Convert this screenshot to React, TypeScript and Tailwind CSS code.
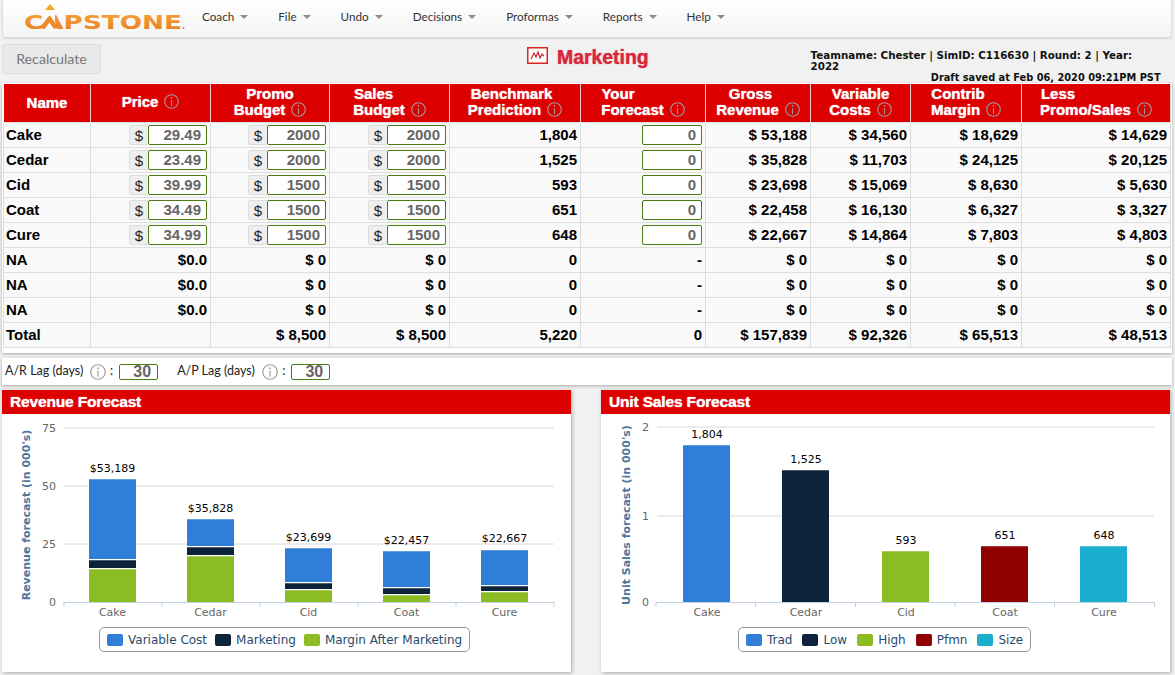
const navItems = ["Coach", "File", "Undo", "Decisions", "Proformas", "Reports", "Help"];

type Row = {
  name: string;
  price: string;
  promo: string;
  sales: string;
  bench: string;
  forecast: string;
  gross: string;
  variable: string;
  margin: string;
  less: string;
  editable?: boolean;
};

const rows: Row[] = [
  { name: "Cake", price: "29.49", promo: "2000", sales: "2000", bench: "1,804", forecast: "0", gross: "$ 53,188", variable: "$ 34,560", margin: "$ 18,629", less: "$ 14,629", editable: true },
  { name: "Cedar", price: "23.49", promo: "2000", sales: "2000", bench: "1,525", forecast: "0", gross: "$ 35,828", variable: "$ 11,703", margin: "$ 24,125", less: "$ 20,125", editable: true },
  { name: "Cid", price: "39.99", promo: "1500", sales: "1500", bench: "593", forecast: "0", gross: "$ 23,698", variable: "$ 15,069", margin: "$ 8,630", less: "$ 5,630", editable: true },
  { name: "Coat", price: "34.49", promo: "1500", sales: "1500", bench: "651", forecast: "0", gross: "$ 22,458", variable: "$ 16,130", margin: "$ 6,327", less: "$ 3,327", editable: true },
  { name: "Cure", price: "34.99", promo: "1500", sales: "1500", bench: "648", forecast: "0", gross: "$ 22,667", variable: "$ 14,864", margin: "$ 7,803", less: "$ 4,803", editable: true },
  { name: "NA", price: "$0.0", promo: "$ 0", sales: "$ 0", bench: "0", forecast: "-", gross: "$ 0", variable: "$ 0", margin: "$ 0", less: "$ 0" },
  { name: "NA", price: "$0.0", promo: "$ 0", sales: "$ 0", bench: "0", forecast: "-", gross: "$ 0", variable: "$ 0", margin: "$ 0", less: "$ 0" },
  { name: "NA", price: "$0.0", promo: "$ 0", sales: "$ 0", bench: "0", forecast: "-", gross: "$ 0", variable: "$ 0", margin: "$ 0", less: "$ 0" },
  { name: "Total", price: "", promo: "$ 8,500", sales: "$ 8,500", bench: "5,220", forecast: "0", gross: "$ 157,839", variable: "$ 92,326", margin: "$ 65,513", less: "$ 48,513" },
];

const headers = [
  { top: "Promo", bottom: "Budget", topClass: "" },
  { top: "Sales", bottom: "Budget", topClass: "pr-[32px]" },
  { top: "Benchmark", bottom: "Prediction", topClass: "pr-[7px]" },
  { top: "Your", bottom: "Forecast", topClass: "pr-[50px]" },
  { top: "Gross", bottom: "Revenue", topClass: "pr-[15px]" },
  { top: "Variable", bottom: "Costs", topClass: "" },
  { top: "Contrib", bottom: "Margin", topClass: "pr-[16px]" },
  { top: "Less", bottom: "Promo/Sales", topClass: "pr-[76px]" },
];

const BLUE = "#2f7ed8";
const NAVY = "#0d233a";
const GREEN = "#8bbc21";
const MAROON = "#910000";
const CYAN = "#1aadce";

// page coordinates: [x, label, labelY, blueTop, blueBottom, navyTop, navyBottom, greenTop]
const revenueBars: [number, string, string, number, number, number, number, number, number][] = [
  [89, "Cake", "$53,189", 472, 479, 559, 560, 568, 569],
  [187, "Cedar", "$35,828", 512, 519, 546, 547, 555, 556],
  [285, "Cid", "$23,699", 541, 548, 582, 583, 589, 590],
  [383, "Coat", "$22,457", 544, 551, 587, 588, 594, 595],
  [481, "Cure", "$22,667", 542, 550, 585, 586, 591, 592],
];

const unitBars = [
  { x: 683, name: "Cake", label: "1,804", top: 445, fill: BLUE },
  { x: 782, name: "Cedar", label: "1,525", top: 470, fill: NAVY },
  { x: 882, name: "Cid", label: "593", top: 551, fill: GREEN },
  { x: 981, name: "Coat", label: "651", top: 546, fill: MAROON },
  { x: 1080, name: "Cure", label: "648", top: 546, fill: CYAN },
];

function InfoIcon({ size = 15, className = "" }: { size?: number; className?: string }) {
  return (
    <svg width={size} height={size} viewBox="0 0 15 15" fill="none" className={`inline-block shrink-0 ${className}`}>
      <circle cx="7.5" cy="7.5" r="6.8" stroke="#a09a9a" strokeWidth="1.1" />
      <circle cx="7.5" cy="3.9" r="0.8" fill="#a09a9a" />
      <path d="M7.5 6.2V12" stroke="#a09a9a" strokeWidth="1.1" />
    </svg>
  );
}

function Logo() {
  return (
    <svg width="166" height="30" viewBox="0 0 166 30" className="shrink-0">
      <defs>
        <linearGradient id="logoFill" x1="0" y1="0" x2="0" y2="1">
          <stop offset="0" stopColor="#f7a83c" />
          <stop offset="1" stopColor="#e8791f" />
        </linearGradient>
      </defs>
      <text x="1" y="25" fontFamily="'DejaVu Sans', sans-serif" fontWeight="700" fontSize="20" textLength="158" lengthAdjust="spacingAndGlyphs" fill="url(#logoFill)">
        CAPSTONE
      </text>
      <polygon points="22,0 32,0 32,25 22,25" fill="#fbfbfb" />
      <path d="M16 24.5 L25 13 L26.5 11.5 L28 13 L36 24.5 L30.5 24.5 L26.5 18.5 L22 24.5 Z" fill="#ee8a2a" />
      <polygon points="22,6 27,0 32,6" fill="#f6a623" />
      <circle cx="160.5" cy="24" r="0.9" fill="#e8791f" />
    </svg>
  );
}

function MoneyInput({ value, addon = true }: { value: string; addon?: boolean }) {
  return (
    <div className="flex h-[20px] justify-end">
      {addon && (
        <span className="flex w-[19px] items-end justify-center rounded-l-[3px] border border-r-0 border-[#ddd] bg-[#eee] text-[15px] font-normal leading-[17px] text-[#222]">
          $
        </span>
      )}
      <input
        readOnly
        value={value}
        className={`${addon ? "w-[59px]" : "w-[60px]"} h-[20px] rounded-[2px] border border-[#4c7a12] bg-white px-[5px] text-right text-[15px] font-bold text-[#666] outline-none`}
      />
    </div>
  );
}

function LagInput({ value }: { value: string }) {
  return (
    <input
      readOnly
      value={value}
      className="mt-[1px] h-[16px] w-[39px] rounded-[2px] border border-[#4c7a12] bg-white pr-[6px] text-right font-['Liberation_Sans'] text-[16px] font-bold text-[#666] outline-none"
    />
  );
}

function Cell({ children, className = "" }: { children?: React.ReactNode; className?: string }) {
  return <td className={`h-[25px] border border-[#ddd] px-[3px] py-0 text-right ${className}`}>{children}</td>;
}

function Caret() {
  return <span className="ml-[6px] h-0 w-0 border-x-[4px] border-t-[4px] border-x-transparent border-t-[#8c8c8c]" />;
}

function Legend({ items, className }: { items: { label: string; color: string }[]; className: string }) {
  return (
    <div className={`flex h-[25px] w-fit items-center rounded-[5px] border border-[#999] px-[7px] font-['DejaVu_Sans',sans-serif] text-[12px] text-[#274b6d] ${className}`}>
      {items.map((item) => (
        <span key={item.label} className="flex items-center gap-[5px]">
          <span className="h-[12px] w-[16px] rounded-[2px]" style={{ background: item.color }} />
          {item.label}
        </span>
      ))}
    </div>
  );
}

function Bar({ x, y, bottom, fill }: { x: number; y: number; bottom: number; fill: string }) {
  return (
    <g>
      <rect x={x} y={y} width="47" height={bottom - y} fill={fill} />
      <rect x={x} y={y} width="47" height="1" fill="#fff" opacity="0.25" />
    </g>
  );
}

function RevenueChart() {
  const grid = [
    { y: 428, label: "75" },
    { y: 486, label: "50" },
    { y: 544, label: "25" },
  ];
  return (
    <svg viewBox="2 414 569 213" width="569" height="213" className="block font-['DejaVu_Sans',sans-serif]">
      {grid.map((g) => (
        <g key={g.label}>
          <line x1="64" x2="554" y1={g.y} y2={g.y} stroke="#d8d8d8" strokeWidth="1" />
          <text x="56" y={g.y + 4} textAnchor="end" fontSize="11" fill="#666">
            {g.label}
          </text>
        </g>
      ))}
      <text x="56" y="606" textAnchor="end" fontSize="11" fill="#666">
        0
      </text>
      <text transform="translate(30 515) rotate(-90)" textAnchor="middle" fontSize="11" fontWeight="700" fill="#4d759e">
        Revenue forecast (in 000's)
      </text>
      {revenueBars.map(([x, name, label, labelY, blueTop, blueBottom, navyTop, navyBottom, greenTop]) => (
        <g key={name}>
          <Bar x={x} y={blueTop} bottom={blueBottom} fill={BLUE} />
          <Bar x={x} y={navyTop} bottom={navyBottom} fill={NAVY} />
          <Bar x={x} y={greenTop} bottom={602} fill={GREEN} />
          <text x={x + 23.5} y={labelY} textAnchor="middle" fontSize="11" fill="#000">
            {label}
          </text>
          <text x={x + 23.5} y="616" textAnchor="middle" fontSize="11" fill="#666">
            {name}
          </text>
        </g>
      ))}
      <line x1="64" x2="554" y1="602.5" y2="602.5" stroke="#c0d0e0" />
      {[64, 162, 260, 358, 456, 554].map((x) => (
        <line key={x} x1={x} x2={x} y1="602" y2="607" stroke="#c0d0e0" />
      ))}
    </svg>
  );
}

function UnitChart() {
  return (
    <svg viewBox="601 414 569 213" width="569" height="213" className="block font-['DejaVu_Sans',sans-serif]">
      {[
        { y: 427, label: "2" },
        { y: 516, label: "1" },
      ].map((g) => (
        <g key={g.label}>
          <line x1="657" x2="1154" y1={g.y} y2={g.y} stroke="#d8d8d8" />
          <text x="649" y={g.y + 4} textAnchor="end" fontSize="11" fill="#666">
            {g.label}
          </text>
        </g>
      ))}
      <text x="649" y="606" textAnchor="end" fontSize="11" fill="#666">
        0
      </text>
      <text transform="translate(630 515) rotate(-90)" textAnchor="middle" fontSize="11" fontWeight="700" fill="#4d759e">
        Unit Sales forecast (in 000's)
      </text>
      {unitBars.map((b) => (
        <g key={b.name}>
          <Bar x={b.x} y={b.top} bottom={602} fill={b.fill} />
          <text x={b.x + 24} y={b.top - 7} textAnchor="middle" fontSize="11" fill="#000">
            {b.label}
          </text>
          <text x={b.x + 24} y="616" textAnchor="middle" fontSize="11" fill="#666">
            {b.name}
          </text>
        </g>
      ))}
      <line x1="656" x2="1154" y1="602.5" y2="602.5" stroke="#c0d0e0" />
      {[656, 755.5, 855.5, 955, 1054.5, 1154.5].map((x) => (
        <line key={x} x1={x} x2={x} y1="602" y2="607" stroke="#c0d0e0" />
      ))}
    </svg>
  );
}

function ChartPanel({ title, children }: { title: string; children: React.ReactNode }) {
  return (
    <div className="h-[282px] w-[569px] bg-white shadow-[1px_1px_4px_rgba(0,0,0,0.3)]">
      <div className="flex h-[24px] items-center bg-[#dd0000] pl-[8px] text-[15.5px] font-bold tracking-[-0.15px] text-white [text-shadow:0_0_1px_#fff]">
        {title}
      </div>
      {children}
    </div>
  );
}

export default function App() {
  return (
    <div className="h-[675px] w-[1175px] overflow-hidden bg-[#f1f1f1] font-['Liberation_Sans',Arial,sans-serif] text-black">
      {/* top nav */}
      <div className="mx-[2px] flex h-[38px] w-[1170px] items-center rounded-b-[4px] border border-t-0 border-[#ddd] bg-gradient-to-b from-white to-[#f4f4f4] pl-[20px] shadow-[0_1px_2px_rgba(0,0,0,0.1)]">
        <Logo />
        <nav className="mb-[3px] ml-[13px] flex items-center gap-[30px] font-['Lato',sans-serif] text-[11.7px] text-[#333]">
          {navItems.map((item) => (
            <span key={item} className="flex items-center">
              {item}
              <Caret />
            </span>
          ))}
        </nav>
      </div>

      {/* title row */}
      <div className="flex h-[45px] items-start pl-[2px] pt-[6px]">
        <button className="h-[30px] w-[99px] rounded-[3px] border border-[#ddd] bg-[#e9e9e9] font-['Lato',sans-serif] text-[14.2px] text-[#777]">
          Recalculate
        </button>
        <svg width="21" height="17" viewBox="0 0 21 17" className="ml-[426px] mt-[3px] shrink-0">
          <rect x="0.75" y="0.75" width="19.5" height="15.5" fill="#fff" stroke="#dd2222" strokeWidth="1.5" />
          <path d="M4 12 L7 6 L9 10 L11 5 L13 11 L15 7 L17 9" fill="none" stroke="#cc2233" strokeWidth="1.2" />
        </svg>
        <h1 className="ml-[9px] text-[19.4px] font-bold leading-[26px] text-[#d8283c] [text-shadow:0_0_1px_#d8283c]">Marketing</h1>
        <div className="ml-[162px] mt-[6px] w-[351px] font-['DejaVu_Sans',sans-serif] font-bold leading-[11px] text-[#111]">
          <div className="w-[335px] text-[10.3px]">Teamname: Chester | SimID: C116630 | Round: 2 | Year: 2022</div>
          <div className="pr-[1px] text-right text-[9.8px]">Draft saved at Feb 06, 2020 09:21PM PST</div>
        </div>
      </div>

      {/* marketing table */}
      <div className="mx-[2px] h-[270px] w-[1170px] bg-white p-[1px] shadow-[0_1px_3px_rgba(0,0,0,0.3)]">
        <table className="w-[1167px] table-fixed border-collapse text-[15px] font-bold leading-none">
          <colgroup>
            <col className="w-[87px]" />
            <col className="w-[120px]" />
            <col className="w-[119px]" />
            <col className="w-[120px]" />
            <col className="w-[131px]" />
            <col className="w-[125px]" />
            <col className="w-[105px]" />
            <col className="w-[100px]" />
            <col className="w-[111px]" />
            <col className="w-[149px]" />
          </colgroup>
          <thead>
            <tr className="h-[38px] bg-[#dd0000] text-white [text-shadow:0_0_1px_#fff]">
              <th className="border-x border-white/80 font-bold">Name</th>
              <th className="border-x border-white/80 pb-[2px] font-bold">
                <span className="inline-flex items-center gap-[6px]">
                  Price <InfoIcon />
                </span>
              </th>
              {headers.map((h) => (
                <th key={h.top} className="border-x border-white/80 pb-[2px] font-bold leading-[16px]">
                  <div className={h.topClass}>{h.top}</div>
                  <div className="flex h-[16px] items-center justify-center gap-[6px]">
                    {h.bottom} <InfoIcon />
                  </div>
                </th>
              ))}
            </tr>
          </thead>
          <tbody className="bg-[#f9f9f9]">
            {rows.map((r, i) => (
              <tr key={`${r.name}-${i}`}>
                <Cell className="pl-[2px] !text-left">{r.name}</Cell>
                <Cell>{r.editable ? <MoneyInput value={r.price} /> : r.price}</Cell>
                <Cell>{r.editable ? <MoneyInput value={r.promo} /> : r.promo}</Cell>
                <Cell>{r.editable ? <MoneyInput value={r.sales} /> : r.sales}</Cell>
                <Cell>{r.bench}</Cell>
                <Cell>{r.editable ? <MoneyInput value={r.forecast} addon={false} /> : r.forecast}</Cell>
                <Cell>{r.gross}</Cell>
                <Cell>{r.variable}</Cell>
                <Cell>{r.margin}</Cell>
                <Cell>{r.less}</Cell>
              </tr>
            ))}
          </tbody>
        </table>
      </div>

      {/* lag inputs */}
      <div className="mx-[2px] mt-[5px] flex h-[27px] w-[1170px] items-center bg-white pl-[3px] font-['Lato',sans-serif] text-[12.5px] text-[#222] shadow-[0_1px_3px_rgba(0,0,0,0.3)]">
        <span className="w-[79px]">A/R Lag (days)</span>
        <InfoIcon size={16} className="ml-[6px]" />
        <span className="ml-[4px] mr-[6px]">:</span>
        <LagInput value="30" />
        <span className="ml-[19px] w-[79px]">A/P Lag (days)</span>
        <InfoIcon size={16} className="ml-[6px]" />
        <span className="ml-[4px] mr-[6px]">:</span>
        <LagInput value="30" />
      </div>

      {/* charts */}
      <div className="mx-[2px] mt-[5px] flex gap-[30px]">
        <ChartPanel title="Revenue Forecast">
          <RevenueChart />
          <Legend
            className="ml-[97px] gap-[8px]"
            items={[
              { label: "Variable Cost", color: BLUE },
              { label: "Marketing", color: NAVY },
              { label: "Margin After Marketing", color: GREEN },
            ]}
          />
        </ChartPanel>
        <ChartPanel title="Unit Sales Forecast">
          <UnitChart />
          <Legend
            className="ml-[137px] gap-[10px]"
            items={[
              { label: "Trad", color: BLUE },
              { label: "Low", color: NAVY },
              { label: "High", color: GREEN },
              { label: "Pfmn", color: MAROON },
              { label: "Size", color: CYAN },
            ]}
          />
        </ChartPanel>
      </div>
    </div>
  );
}
